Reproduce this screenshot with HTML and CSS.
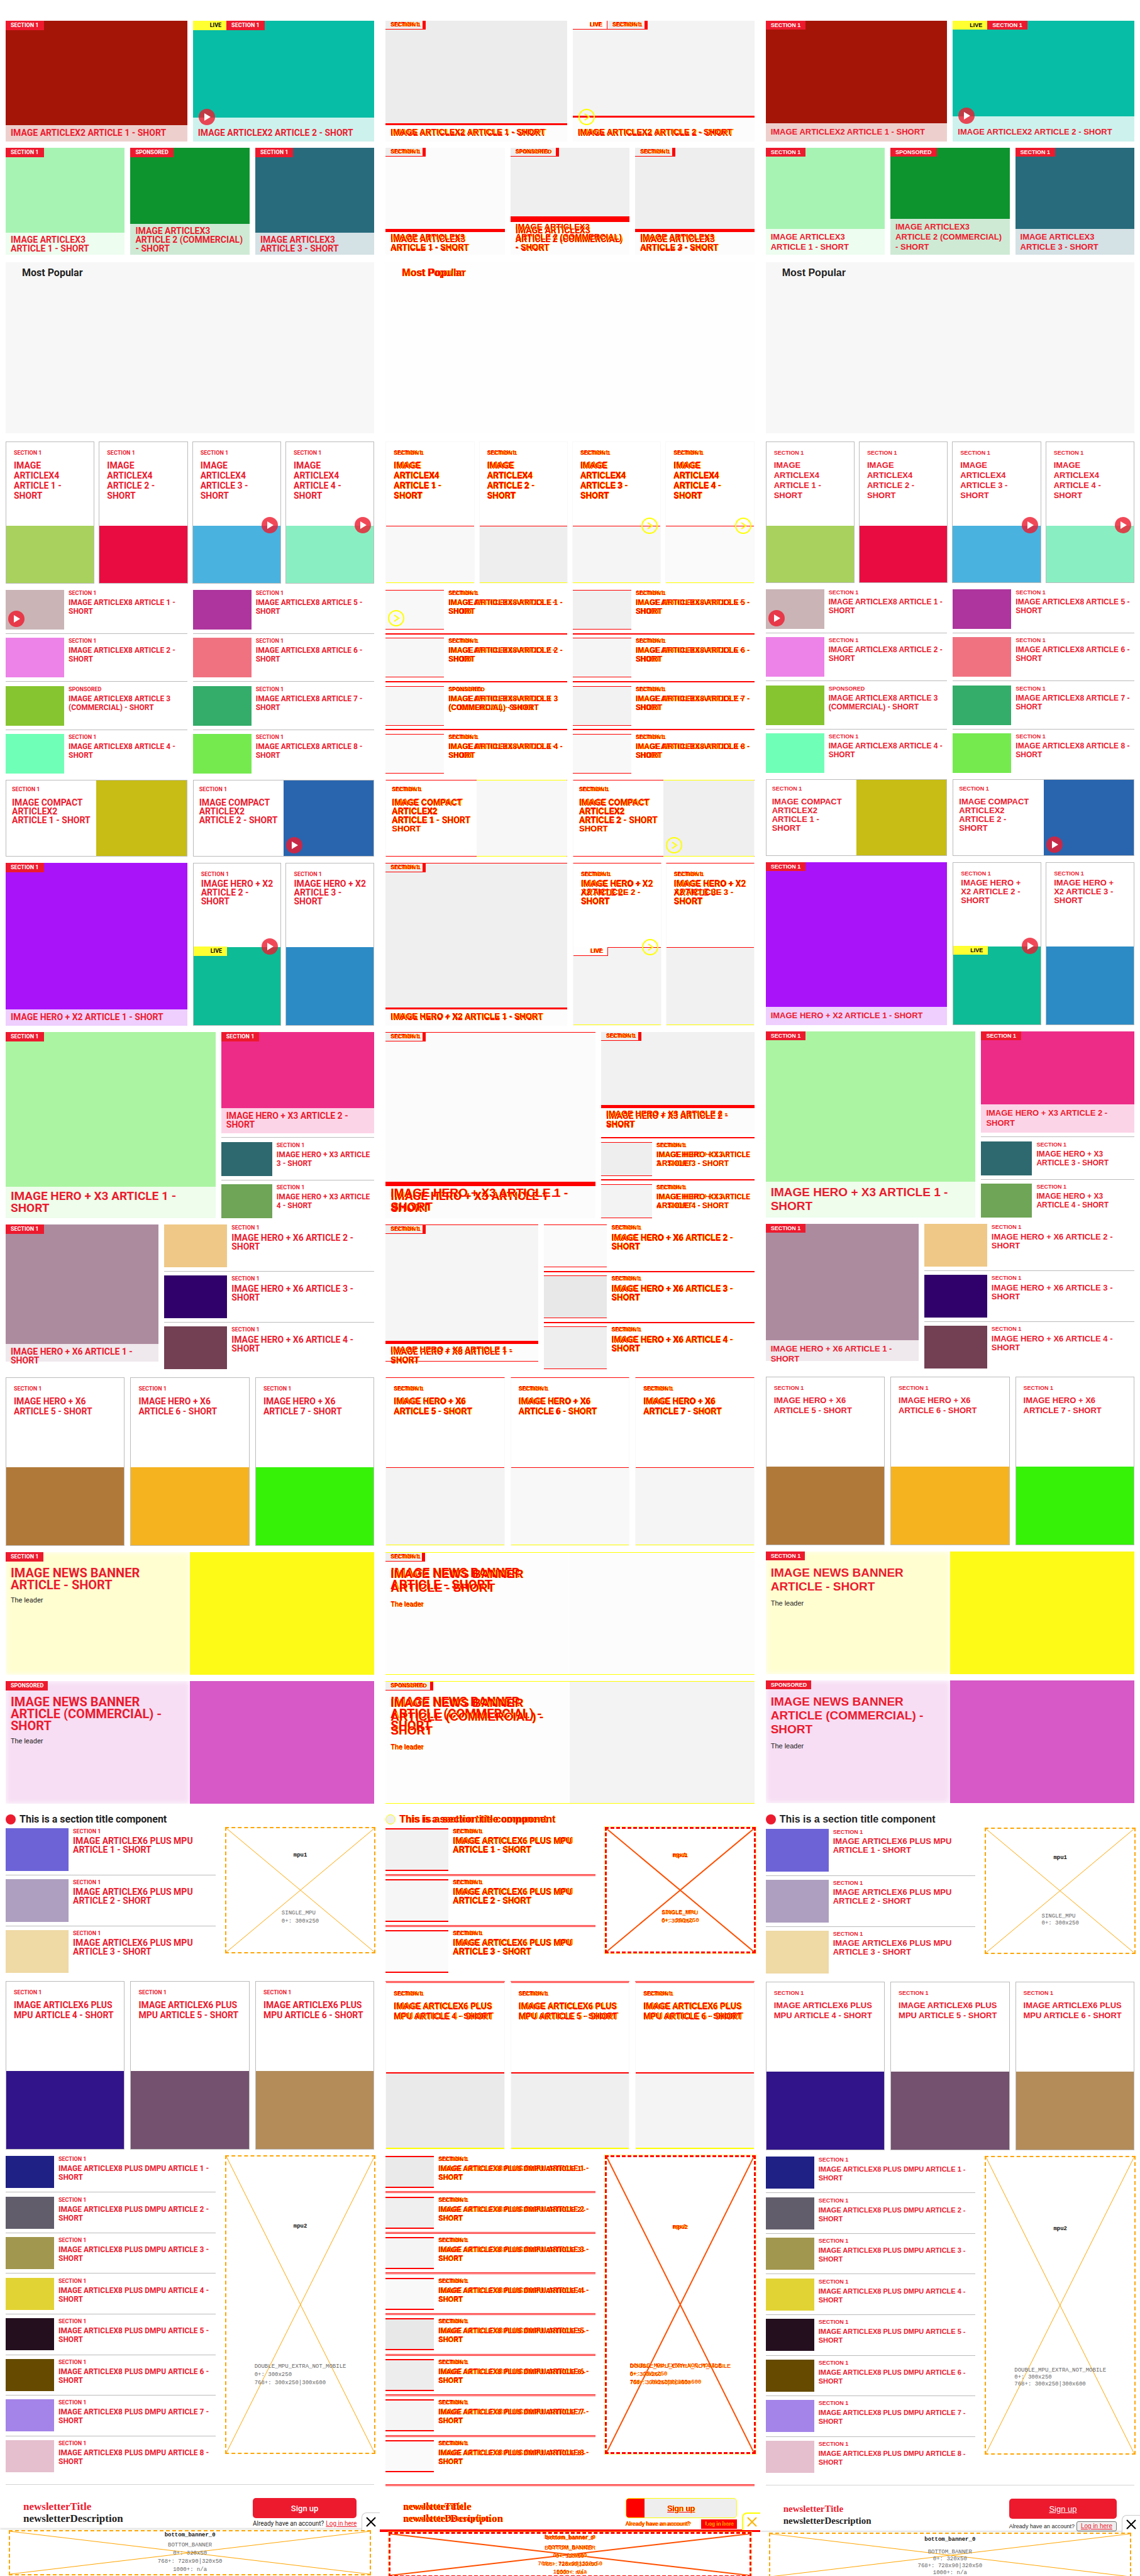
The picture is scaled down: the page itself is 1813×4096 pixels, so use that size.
FILE: index.html
```html
<!DOCTYPE html>
<html lang="en">
<head>
<meta charset="utf-8">
<meta name="viewport" content="width=device-width, initial-scale=1">
<title>Visual regression: teasers</title>
<link rel="stylesheet" href="styles.css">
</head>
<body>
<div class="compare">
<main class="shot base" data-variant="base"></main>
<section class="shot diff" data-variant="diff" aria-label="Difference"></section>
<section class="shot next" data-variant="next" aria-label="New version"></section>
</div>
<script src="script.js"></script>
</body>
</html>
```
FILE: styles.css
```css
* { box-sizing: border-box; margin: 0; }
body { background: #fff; color: #222; }
.compare { display: grid; grid-template-columns: repeat(3, minmax(0, 1fr)); }

.shot {
  --red: #ed1a2e;
  --line: #bbb;
  --font: Roboto, sans-serif;
  --lab: 9px;
  --xs: 12px;
  --sm: 12px;
  --md: 14px;
  --lg: 19px;
  --xl: 20px;
  --ttl: 16px;
  --cap-lh: 14px;
  --lg-lh: 19px;
  --mono-lh: 13px;
  font-family: var(--font);
  display: flex;
  flex-direction: column;
  position: relative;
  overflow: hidden;
}
.next, .alt {
  --font: "Liberation Sans", Arial, sans-serif;
  --xs: 11px;
  --md: 13px;
  --xl: 19px;
  --ttl: 16px;
  --cap-lh: 16px;
  --lg-lh: 22px;
  --mono-lh: 11px;
}
.blocks { display: flex; flex-direction: column; padding: 33px 9px 0; gap: 10px; }
a { color: inherit; text-decoration: none; }

/* text */
.hd, .lb, .leader { display: block; white-space: nowrap; font-weight: 700; color: var(--red); }
.hd { font-size: var(--md); line-height: 14px; }
.hd.sm { font-size: var(--sm); }
.hd.xs { font-size: var(--xs); }
.lb { font-size: var(--lab); line-height: 12px; }
.leader { font-size: 11px; line-height: 14px; font-weight: 400; color: #222; margin-top: 8px; }

/* grids */
.row { display: grid; column-gap: 9px; }
.two { grid-template-columns: repeat(2, minmax(0, 1fr)); }
.three { grid-template-columns: repeat(3, minmax(0, 1fr)); }
.four { grid-template-columns: repeat(4, minmax(0, 1fr)); column-gap: 7px; }
.pair { grid-template-columns: repeat(2, minmax(0, 1fr)); column-gap: 7px; }
.hero3 { grid-template-columns: minmax(0, 333fr) minmax(0, 243fr); height: 296px; }
.hero6 { grid-template-columns: minmax(0, 243fr) minmax(0, 334fr); height: 230px; }
.withad { grid-template-columns: minmax(0, 333fr) minmax(0, 239fr); column-gap: 15px; margin-right: -2px; }
.h-a { height: 192px; }
.h-b { height: 170px; }
.h-c { height: 226px; margin-top: 3px; }
.h-e { height: 122px; }
.h-f { height: 259px; }
.h-i { height: 268px; margin-top: 3px; }
.next .h-c { height: 225px; }

/* image card with the caption laid over it */
.over { position: relative; display: flex; flex-direction: column; justify-content: space-between; align-items: flex-start; }
.tags { display: flex; }
.tag { background: var(--red); color: #fff; font-size: var(--lab); font-weight: 700; line-height: 15px; padding: 0 8px; white-space: nowrap; }
.next .tag { line-height: 14px; }
.live { background: #ffff32; color: #000; padding: 0 8px 0 27px; }
.cap { position: relative; align-self: stretch; background: rgba(255, 255, 255, .8); padding: 5px 8px 7px; }
.next .cap { padding-top: 6px; }
.cap .hd { line-height: var(--cap-lh); }
.h-b .cap { padding: 4px 8px 3px; }
.next .h-b .cap { padding: 5px 8px 4px; }
.cap.big .hd { font-size: var(--lg); line-height: var(--lg-lh); }
.cap.short { height: 28px; }
.next .cap.short { height: 33px; }
.cap.played, .next .cap.played { padding-top: 17px; }
.hero6 > .over { height: 218px; }

/* play badge */
.play { position: absolute; width: 26px; height: 26px; }
.cap .play { left: 9px; top: -14px; }
.pic .play { left: 4px; bottom: 4px; }
.tall .play { right: 4px; top: -14px; left: auto; }

/* bordered card, text above image */
.tall { display: flex; flex-direction: column; border: 1px solid var(--line); }
.tall .txt { height: 133px; padding: 11px 12px; }
.h-i .txt { height: 142px; }
.tall .hd { margin-top: 6px; line-height: 16px; }
.pair .hd { margin-top: 2px; line-height: 14px; }
.tall .pic { flex: 1; position: relative; }
.tall .live { position: absolute; left: 0; top: -1px; }

/* side by side card */
.compact { display: grid; grid-template-columns: minmax(0, 1fr) minmax(0, 1fr); border: 1px solid var(--line); }
.compact .txt { padding: 8px 9px; }
.compact .hd { margin-top: 8px; }
.compact .pic { position: relative; }

/* thumbnail lists */
.list { display: flex; flex-direction: column; justify-content: space-between; }
.list > hr { border: 0; height: 1px; background: var(--line); }
.item { display: grid; grid-template-columns: 93px minmax(0, 1fr); column-gap: 7px; }
.item .pic { position: relative; height: 63px; }
.item .lb { line-height: 10px; }
.item .hd { margin-top: 3px; }
.l-d { height: 292px; }
.l-g .item { grid-template-columns: 81px minmax(0, 1fr); }
.l-g .item .pic { height: 54px; }
.l-g .over { height: 161px; }
.l-h .item { grid-template-columns: 100px minmax(0, 1fr); }
.l-h .item .pic, .l-l .item .pic { height: 68px; }
.l-h .item .hd { margin-top: 4px; }
.l-l { height: 230px; }
.l-l .item { grid-template-columns: 100px minmax(0, 1fr); }
.l-n { height: 503px; }
.l-n .item { grid-template-columns: 77px minmax(0, 1fr); }
.l-n .item .pic { height: 51px; }

/* most popular */
.popular { height: 272px; margin-top: 2px; background: #f7f7f7; padding: 6px 26px; }
.popular h2, .title h2 { font-size: var(--ttl); line-height: 22px; font-weight: 700; white-space: nowrap; }

/* news banner */
.news { display: grid; grid-template-columns: minmax(0, 1fr) minmax(0, 1fr); height: 195px; }
.news .txt { background: color-mix(in srgb, var(--c) 20%, #fff); box-shadow: inset 0 0 8px #fff; display: flex; flex-direction: column; align-items: flex-start; }
.news .tag { padding: 0 7px 0 8px; }
.news .hd { font-size: var(--xl); line-height: var(--lg-lh); margin: 9px 8px 0; }
.news .leader { margin-left: 8px; }

/* section title */
.title { display: flex; align-items: center; gap: 6px; height: 29px; margin-bottom: -10px; }
.next .title { height: 31px; }
.dot { width: 16px; height: 16px; border-radius: 50%; background: var(--red); }

/* ad slots */
.ad { position: relative; border: 2px dashed #ffa500; color: #666; font: 9px/var(--mono-lh) "Liberation Mono", monospace; display: flex; flex-direction: column; }
.ad svg { position: absolute; inset: 0; width: 100%; height: 100%; stroke: #ffa500; }
.ad div { flex: 1; display: grid; place-content: center; padding-bottom: 12px; position: relative; }
.ad b { color: #111; }
.ad p { white-space: nowrap; }
.mpu { height: 201px; margin-top: -2px; }
.dmpu { height: 475px; margin-top: -1px; }
.next .ad div { padding-bottom: 6px; }

/* newsletter */
.rule { border: 0; height: 1px; background: #d4d4d4; margin: 9px 0 0; }
.letter { display: flex; justify-content: space-between; height: 71px; padding: 21px 37px 0; }
.letter h3, .letter h4 { font: 700 17px/19px "Liberation Serif", serif; white-space: nowrap; }
.letter h3 { color: var(--red); margin-top: 4px; }
.next .letter { height: 74px; }
.next .letter h3, .next .letter h4, h3 .alt, h4 .alt { font-family: "Liberation Serif", serif; font-size: 15px; }
.next .letter h3 { margin-top: 7px; }
.join { display: flex; flex-direction: column; }
.join button { font-family: inherit; }
.signup { height: 32px; border: 0; border-radius: 5px; background: var(--red); color: #fff; font-size: 13px; font-weight: 500; padding: 0; }
.next .signup { font-weight: 400; text-decoration: underline; }
.join p { font-size: 10px; line-height: 18px; white-space: nowrap; display: flex; gap: 3px; align-items: center; }
.join p a { color: var(--red); text-decoration: underline; }
.login { font-size: 10px; line-height: 12px; color: var(--red); text-decoration: underline; background: #efefef; border: 1px solid #777; border-radius: 3px; padding: 1px 6px; }
.next .join p { margin-top: 4px; font-size: 9px; line-height: 16px; }

/* sticky bottom banner */
.banner { position: relative; height: 74px; background: #fff; box-shadow: 0 -1px 3px rgba(0, 0, 0, .2); padding: 1px 14px 0; }
.next .banner { height: 71px; }
.banner .ad { height: 72px; text-align: center; }
.banner .ad div, .next .banner .ad div { flex: none; padding: 0; place-content: start center; }
.banner .ad b { line-height: 13px; margin-bottom: 3px; }
.next .banner .ad b { margin: 3px 0 8px; }
.close { position: absolute; right: 0; bottom: 73px; width: 29px; height: 28px; border: 1px solid #ccc; border-width: 1px 0 0 1px; border-radius: 8px 0 0 0; background: #fff; padding: 5px 6px; }
.next .close { bottom: 70px; }
.close svg { display: block; width: 16px; height: 16px; }

/* difference rendering */
.diff { --line: #f8f8f8; --red: #f00; }
.mix { display: inline-grid; }
.mix > span { grid-area: 1 / 1; color: #f00; text-shadow: 1px 0 #ff0; }
.alt { font-family: var(--font); }
.hd .alt { font-size: var(--md); }
.hd.sm .alt { font-size: var(--sm); }
.hd.xs .alt { font-size: var(--xs); }
.popular .alt, .title .alt { font-size: var(--ttl); }
.cap .mix { align-items: end; }
.cap .alt { line-height: var(--cap-lh); }
.cap.big .hd .alt { font-size: var(--lg); line-height: var(--lg-lh); }
.news .hd .alt { font-size: var(--xl); line-height: var(--lg-lh); }
.diff .tag .mix { max-width: 43px; }
.diff .tag { background: #eee; line-height: 13px; border-bottom: 1px solid #f00; border-right: 5px solid #f00; }
.diff .tag.sponsored .mix { max-width: 56px; }
.diff .live { background: #fefefe; border-right-width: 1px; }
.diff .live .mix { max-width: 19px; }
.diff .cap { background: #fcfcfc; border-top: 3px solid #f00; padding-top: 3px; }
.diff .cap.l2 { border-top-width: 5px; padding-top: 1px; }
.diff .h-b .cap { border-top-width: 5px; padding: 0 8px 4px; }
.diff .h-b .cap.l3 { border-top-width: 9px; }
.diff .cap.big { border-top-width: 7px; padding-top: 0; }
.diff .cap.played { padding-top: 15px; }
.diff .cap.short { height: 33px; border-bottom: 1px solid #f00; }
.diff .item .pic { border: solid #f00; border-width: 1px 0; }
.diff .list > hr { height: 2px; background: #f00; }
.diff .l-l .item .pic, .diff .l-n .item .pic { border-width: 2px 0; }
.diff .l-l > hr, .diff .l-n > hr, .diff .rule { height: 3px; background: none; border-top: 3px double #f00; }
.diff .tall .pic { border: solid #f00; border-width: 1px 0; border-bottom-color: #ff0; }
.diff .pair .tall, .diff .h-i .tall { border-top-color: #f00; }
.diff .h-m .tall { border-top: 3px double #f00; }
.diff .h-m .pic { border-width: 2px 0; }
.diff .compact { border-color: #f00 #f8f8f8; }
.diff .compact .pic { margin: -1px 0; border: solid #ff0; border-width: 1px 0; }
.diff .popular { background: #fefefe; }
.diff .news { border: solid #ff0; border-width: 1px 0; }
.diff .news .txt { background: #fdfdfd; }
.diff .hero3 > .over, .diff .hero6 > .over, .diff .h-f > .over { border-top: 1px solid #f00; }
.diff .dot { background: #eee; border: 1px solid #ff0; }
.diff .ad { border: 3px dashed #f00; outline: 1px dotted #ff0; }
.diff .ad svg { stroke: #ff5000; stroke-width: 2px; }
.diff .signup { background: linear-gradient(90deg, #f00 29px, #eee 29px); border: 1px solid #ff0; width: 177px; }
.diff .signup .alt { text-decoration: underline; font-weight: 400; }
.diff .join p { font-size: 9px; gap: 4px; }
.diff .join p a { background: #f00; margin-left: auto; padding: 0 6px; line-height: 15px; }
.diff .rule { margin-bottom: -2px; }
.diff .banner { border-top: 4px solid #f00; padding-top: 0; box-shadow: none; }
.diff .close { border-color: #ff0; border-width: 2px 0 0 2px; }
```
FILE: script.js
```js
const S = 'SECTION 1', P = 'SPONSORED';

function luma(hex) {
  const n = parseInt(hex.slice(1), 16);
  const y = 0.299 * (n >> 16) + 0.587 * ((n >> 8) & 255) + 0.114 * (n & 255);
  return Math.round(255 + (y - 255) * 0.1);
}

function build(variant) {
  const diff = variant === 'diff', next = variant === 'next';
  const br = s => s.replace(/\|/g, '<br>');
  // a text, and how it wraps in the new version when that differs
  const t = (s, n = s) => diff
    ? `<span class="mix"><span>${br(s)}</span><span class="alt" aria-hidden="true">${br(n)}</span></span>`
    : br(next ? n : s);
  const col = c => { if (!diff) return c; const g = luma(c); return `rgb(${g},${g},${g})`; };
  const bg = c => `style="background-color:${col(c)}"`;
  const play = () => diff
    ? '<svg class="play" viewBox="0 0 26 26"><g fill="none"><circle cx="13" cy="13" r="12" stroke="#ff0" stroke-width="2"/><path d="M10 8l7 5-7 5" stroke="#ff0" stroke-width="2"/></g></svg>'
    : '<svg class="play" viewBox="0 0 26 26"><circle cx="13" cy="13" r="13" fill="#ed1a2e" fill-opacity=".8"/><path d="M9 7l10 6-10 6z" fill="#fff"/></svg>';
  const live = `<span class="tag live">${t('LIVE')}</span>`;
  const tag = s => `<span class="tag ${s.toLowerCase()}">${t(s)}</span>`;
  const hd = (s, n, cls = '') => `<a class="hd ${cls}" href="#">${t(s, n)}</a>`;
  const lb = s => `<span class="lb">${t(s)}</span>`;

  const over = (c, s, n, o = {}) => `<article class="over" ${bg(c)}>
    <div class="tags">${o.live ? live : ''}${tag(o.tag || S)}</div>
    <div class="cap l${s.split('|').length} ${o.cap || ''}">${o.play ? play() : ''}${hd(s, n)}</div></article>`;
  const tall = (c, s, n, o = {}) => `<article class="tall"><div class="txt">${lb(S)}${hd(s, n)}</div>
    <div class="pic" ${bg(c)}>${o.live ? live : ''}${o.play ? play() : ''}</div></article>`;
  const compact = (c, s, n, p) => `<article class="compact"><div class="txt">${lb(S)}${hd(s, n)}</div>
    <div class="pic" ${bg(c)}>${p ? play() : ''}</div></article>`;
  const item = (c, s, n, cls, o = {}) => `<article class="item"><div class="pic" ${bg(c)}>${o.play ? play() : ''}</div>
    <div>${lb(o.tag || S)}${hd(s, n, cls)}</div></article>`;
  const list = (cls, items) => `<div class="list ${cls}">${items.join('<hr>')}</div>`;
  const news = (c, label, s) => `<article class="news" style="--c:${c}"><div class="txt">${tag(label)}
    ${hd(s)}<span class="leader">${t('The leader')}</span></div><div class="pic" ${bg(c)}></div></article>`;
  const ad = (cls, name, lines) => `<div class="ad ${cls}"><svg viewBox="0 0 100 100" preserveAspectRatio="none" aria-hidden="true">
    <path d="M0 0L100 100M100 0L0 100" fill="none" vector-effect="non-scaling-stroke"/></svg>
    <div><b>${t(name)}</b></div><div><p>${t(lines)}</p></div></div>`;
  const row = (cls, ...kids) => `<div class="row ${cls}">${kids.join('')}</div>`;
  const x8 = (c, i, o) => i === 3
    ? item(c, 'IMAGE ARTICLEX8 ARTICLE 3|(COMMERCIAL) - SHORT', undefined, 'sm', o)
    : item(c, `IMAGE ARTICLEX8 ARTICLE ${i} -|SHORT`, undefined, 'sm', o);

  return `<div class="blocks">
  ${row('two h-a', over('#a41508', 'IMAGE ARTICLEX2 ARTICLE 1 - SHORT'),
    over('#08bda5', 'IMAGE ARTICLEX2 ARTICLE 2 - SHORT', undefined, { live: 1, play: 1, cap: 'played' }))}
  ${row('three h-b', over('#a7f3b3', 'IMAGE ARTICLEX3|ARTICLE 1 - SHORT'),
    over('#0d942e', 'IMAGE ARTICLEX3|ARTICLE 2 (COMMERCIAL)|- SHORT', undefined, { tag: P }),
    over('#286b7d', 'IMAGE ARTICLEX3|ARTICLE 3 - SHORT'))}
  <section class="popular"><h2>${t('Most Popular')}</h2></section>
  ${row('four h-c', ...['#a8d25d', '#e90c40', '#4ab2de', '#89efc3'].map((c, i) =>
    tall(c, `IMAGE|ARTICLEX4|ARTICLE ${i + 1} -|SHORT`, undefined, { play: i > 1 })))}
  ${row('two', list('l-d', ['#cab4b6', '#ed83e8', '#87c530', '#70ffb7'].map((c, i) => x8(c, i + 1, { play: i === 0, tag: i === 2 ? P : S }))),
    list('l-d', ['#ad359d', '#f07281', '#33ad69', '#74ea4f'].map((c, i) => x8(c, i + 5, {}))))}
  ${row('two h-e', ...['#c7bd14', '#2965ae'].map((c, i) =>
    compact(c, `IMAGE COMPACT|ARTICLEX2|ARTICLE ${i + 1} - SHORT`, `IMAGE COMPACT|ARTICLEX2|ARTICLE ${i + 1} -|SHORT`, i)))}
  ${row('two h-f', over('#a913fa', 'IMAGE HERO + X2 ARTICLE 1 - SHORT'),
    row('pair', ...['#0dbb96', '#2c8bc5'].map((c, i) =>
      tall(c, `IMAGE HERO + X2|ARTICLE ${i + 2} -|SHORT`, `IMAGE HERO +|X2 ARTICLE ${i + 2} -|SHORT`, { live: !i, play: !i }))))}
  ${row('hero3', over('#abf4a2', 'IMAGE HERO + X3 ARTICLE 1 -|SHORT', undefined, { cap: 'big' }),
    list('l-g', [over('#ed2c88', 'IMAGE HERO + X3 ARTICLE 2 -|SHORT'),
      ...['#2e696f', '#6ea556'].map((c, i) => item(c, `IMAGE HERO + X3 ARTICLE|${i + 3} - SHORT`, `IMAGE HERO + X3|ARTICLE ${i + 3} - SHORT`, 'sm'))]))}
  ${row('hero6', over('#ad8b9f', 'IMAGE HERO + X6 ARTICLE 1 -|SHORT', undefined, { cap: 'short' }),
    list('l-h', ['#efc887', '#31016b', '#733f53'].map((c, i) => item(c, `IMAGE HERO + X6 ARTICLE ${i + 2} -|SHORT`))))}
  ${row('three h-i', ...['#b17939', '#f5b320', '#35f207'].map((c, i) => tall(c, `IMAGE HERO + X6|ARTICLE ${i + 5} - SHORT`)))}
  ${news('#fdfa18', S, 'IMAGE NEWS BANNER|ARTICLE - SHORT')}
  ${news('#d659c7', P, 'IMAGE NEWS BANNER|ARTICLE (COMMERCIAL) -|SHORT')}
  <div class="title"><span class="dot"></span><h2>${t('This is a section title component')}</h2></div>
  ${row('withad', list('l-l', ['#6d63d7', '#ae9fc0', '#efd9a5'].map((c, i) => item(c, `IMAGE ARTICLEX6 PLUS MPU|ARTICLE ${i + 1} - SHORT`))),
    ad('mpu', 'mpu1', 'SINGLE_MPU|0+: 300x250'))}
  ${row('three h-i h-m', ...['#32148a', '#74516f', '#b38c5a'].map((c, i) => tall(c, `IMAGE ARTICLEX6 PLUS|MPU ARTICLE ${i + 4} - SHORT`)))}
  ${row('withad', list('l-n', ['#1f2184', '#625d6b', '#a2974f', '#e2d335', '#240f1f', '#654a00', '#a484e8', '#e5bfce'].map((c, i) =>
    item(c, `IMAGE ARTICLEX8 PLUS DMPU ARTICLE ${i + 1} -|SHORT`, undefined, 'xs'))),
    ad('dmpu', 'mpu2', 'DOUBLE_MPU_EXTRA_NOT_MOBILE|0+: 300x250|768+: 300x250&#124;300x600'))}
  <hr class="rule"></div>
  <section class="letter"><div><h3>${t('newsletterTitle')}</h3><h4>${t('newsletterDescription')}</h4></div>
    <div class="join"><button class="signup" type="button">${t('Sign up')}</button>
    <p><span>${t('Already have an account?')}</span>${next
      ? '<button class="login" type="button">Log in here</button>' : `<a href="#">${t('Log in here')}</a>`}</p></div></section>
  <aside class="banner"><button class="close" type="button" aria-label="Close"><svg viewBox="0 0 16 16">
    <path d="M1 1l14 14M15 1L1 15" stroke="${diff ? '#ffb400' : '#000'}" stroke-width="2"/></svg></button>
    ${ad('', 'bottom_banner_0', 'BOTTOM_BANNER|0+: 320x50|768+: 728x90&#124;320x50|1000+: n/a')}</aside>`;
}

document.querySelectorAll('.shot').forEach(el => { el.innerHTML = build(el.dataset.variant); });
```
